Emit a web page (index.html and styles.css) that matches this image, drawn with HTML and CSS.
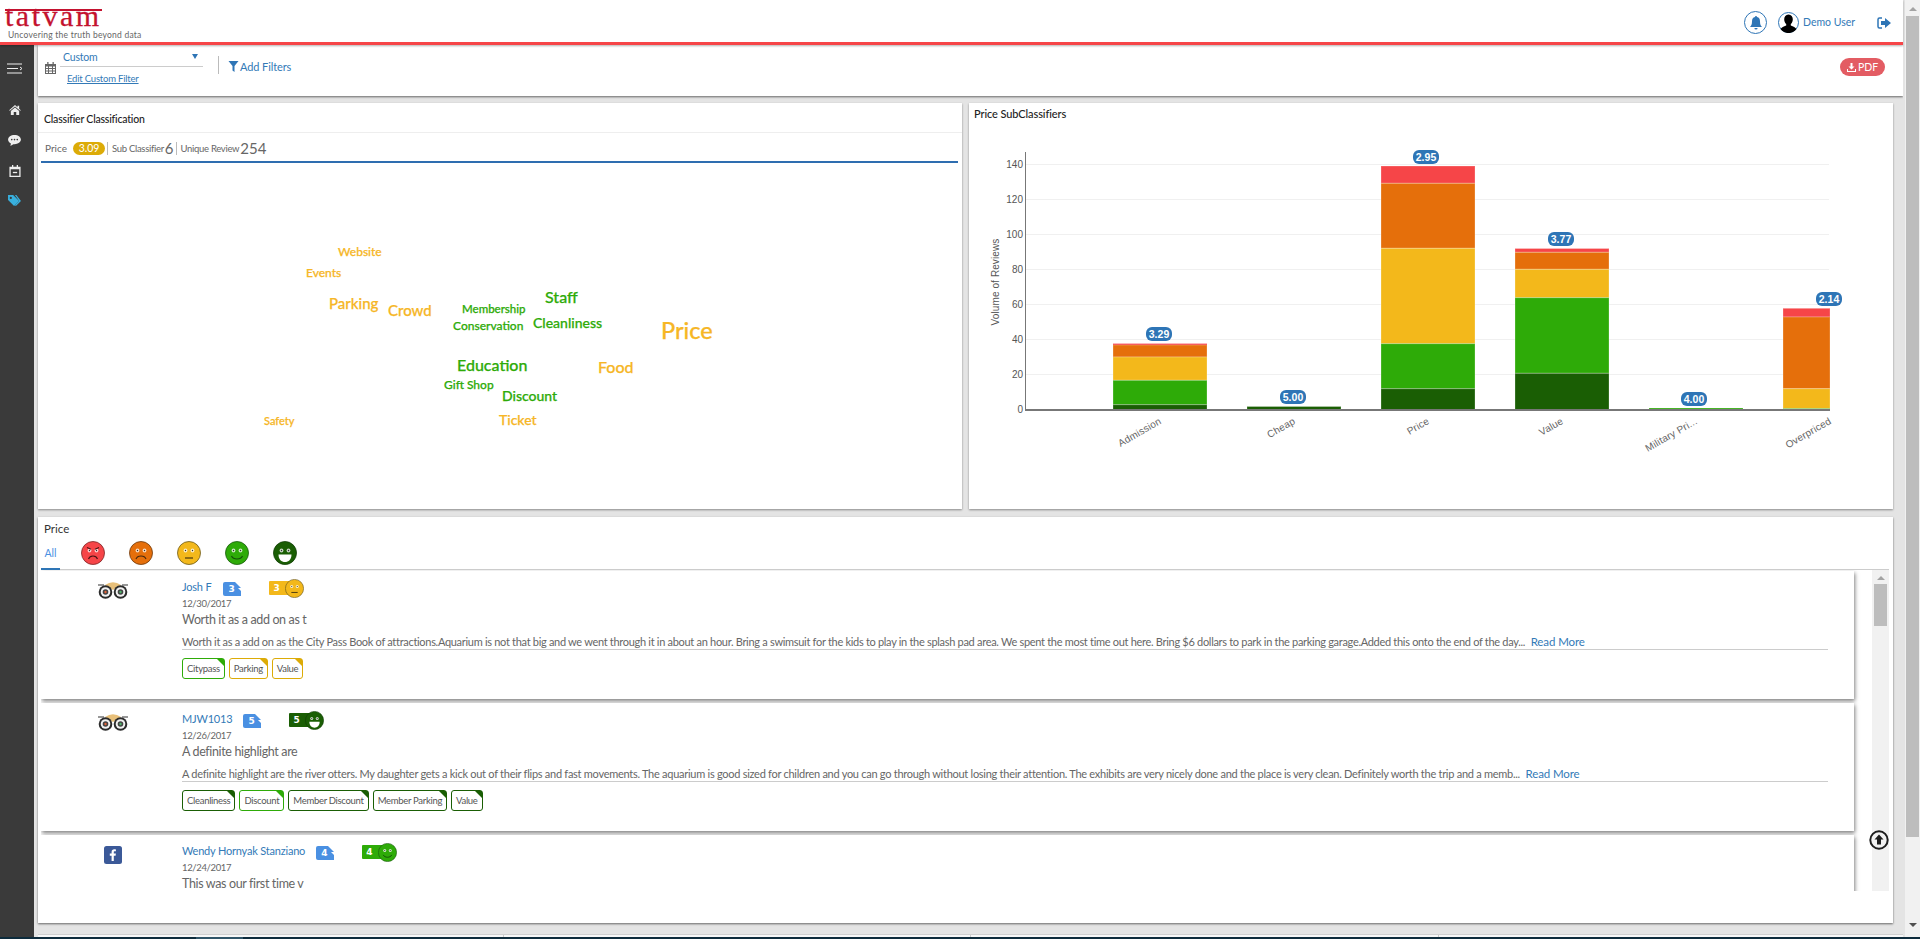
FILE: index.html
```html
<!DOCTYPE html>
<html lang="en">
<head>
<meta charset="utf-8">
<title>Tatvam</title>
<link rel="stylesheet" href="styles.css">
</head>
<body>
<svg class="defs" width="0" height="0" aria-hidden="true">
  <symbol id="eyes" viewBox="0 0 24 24">
    <circle cx="8.5" cy="9.5" r="1.9" fill="#fff" fill-opacity=".75"/><circle cx="15.5" cy="9.5" r="1.9" fill="#fff" fill-opacity=".75"/>
    <circle cx="8.5" cy="9.5" r=".7" fill="#333"/><circle cx="15.5" cy="9.5" r=".7" fill="#333"/>
  </symbol>
  <symbol id="f1" viewBox="0 0 24 24"><circle cx="12" cy="12" r="11.5" fill="#f64548" stroke="#7a2a2a" stroke-width=".8"/><use href="#eyes" width="24" height="24"/><path d="M6 6.5l4 1.8M18 6.5l-4 1.8M7.5 18c1.5-4 7.500-4 9 0" fill="none" stroke="#4a1515" stroke-width="1.200"/></symbol>
  <symbol id="f2" viewBox="0 0 24 24"><circle cx="12" cy="12" r="11.500" fill="#e56f0b" stroke="#6b3a10" stroke-width=".8"/><use href="#eyes" width="24" height="24"/><path d="M7 18c1.500-4 8.500-4 10 0" fill="none" stroke="#4a2a10" stroke-width="1.200"/></symbol>
  <symbol id="f3" viewBox="0 0 24 24"><circle cx="12" cy="12" r="11.500" fill="#f3b81b" stroke="#6b5a20" stroke-width=".8"/><use href="#eyes" width="24" height="24"/><path d="M8 17h8" fill="none" stroke="#4a3a10" stroke-width="1.200"/></symbol>
  <symbol id="f4" viewBox="0 0 24 24"><circle cx="12" cy="12" r="11.500" fill="#2eab08" stroke="#1b5c10" stroke-width=".8"/><use href="#eyes" width="24" height="24"/><path d="M6.500 15c2 4 9 4 11 0" fill="none" stroke="#14500a" stroke-width="1.200"/></symbol>
  <symbol id="f5" viewBox="0 0 24 24"><circle cx="12" cy="12" r="11.500" fill="#1a5e04" stroke="#123f08" stroke-width=".8"/><use href="#eyes" width="24" height="24"/><path d="M5.500 13.500h13c0 5-3 7.500-6.500 7.500s-6.500-2.500-6.500-7.500z" fill="#fff"/></symbol>
  <symbol id="owl" viewBox="0 0 30 18">
    <path d="M7 4Q15-1.500 23 4L15 9z" fill="#e8c07a"/>
    <path d="M0 4h6M30 4h-6" stroke="#333" stroke-width="1.200"/>
    <circle cx="7.500" cy="11" r="6.800" fill="#2c2c2c"/><circle cx="22.500" cy="11" r="6.800" fill="#2c2c2c"/>
    <circle cx="7.500" cy="11" r="4.800" fill="#f2f2f2"/><circle cx="22.500" cy="11" r="4.800" fill="#f2f2f2"/>
    <circle cx="7.500" cy="11" r="2.800" fill="#444"/><circle cx="22.500" cy="11" r="2.800" fill="#444"/>
    <circle cx="7.500" cy="11" r="1.200" fill="#e0633a"/><circle cx="22.500" cy="11" r="1.200" fill="#4fb36a"/>
  </symbol>
  <symbol id="fold" viewBox="0 0 18 14"><path d="M0 2a2 2 0 0 1 2-2h16v14H2a2 2 0 0 1-2-2z" fill="#4a90e2"/><path d="M12 0l6 6V0z" fill="#fff"/><path d="M15 6l3 3V6z" fill="#fff"/></symbol>
</svg>

<div class="shell">
  <div class="page">
    <header class="topbar">
      <div class="logo">
        <span class="logo-word">tatvam</span>
        <span class="logo-tag">Uncovering the truth beyond data</span>
      </div>
      <div class="user">
        <span class="bell">
          <svg width="12" height="14" viewBox="0 0 12 14"><path d="M6 0a1 1 0 0 1 1 1.100C9.200 1.500 10 3.300 10 5.500c0 3 .8 4.300 2 5.500H0c1.200-1.200 2-2.500 2-5.500C2 3.300 2.800 1.500 5 1.100A1 1 0 0 1 6 0zM4.400 12h3.200a1.600 1.600 0 0 1-3.200 0z" fill="#2e75b6"/></svg>
        </span>
        <span class="avatar">
          <svg width="21" height="21" viewBox="0 0 21 21"><circle cx="10.500" cy="10.500" r="10" fill="#fff" stroke="#2e75b6"/><path d="M10.500 2.500c2.800 0 4.300 2.200 4.300 4.800 0 2-.8 3.800-2 4.800v1.300c2.500 1 4.700 1.800 5.700 3.700a10 10 0 0 1-16 0c1-1.900 3.200-2.700 5.700-3.700v-1.300c-1.200-1-2-2.800-2-4.800 0-2.600 1.500-4.800 4.300-4.800z" fill="#000"/></svg>
        </span>
        <span class="user-name">Demo User</span>
        <svg class="signout" width="14" height="12" viewBox="0 0 14 12"><path d="M5 1H2.500A1.500 1.500 0 0 0 1 2.500v7A1.500 1.500 0 0 0 2.500 11H5" fill="none" stroke="#2e75b6" stroke-width="1.500"/><path d="M8 1l6 5-6 5V8H4V4h4z" fill="#2e75b6"/></svg>
      </div>
    </header>

    <div class="workspace">
      <nav class="sidebar">
        <svg class="nav-first" width="16" height="11" viewBox="0 0 16 11"><path d="M0 1h15M0 5.500h11M0 10h15" stroke="#eee" stroke-width="1.200"/><path d="M13 4l2 1.500L13 7" fill="none" stroke="#eee"/></svg>
        <svg class="nav-home" width="12" height="10" viewBox="0 0 14 12"><path d="M7 0l3 2.600V1h2v3.400l2 1.800-.8.8L7 1.800.8 7 0 6.200zM2 7.200L7 3l5 4.200V12H8.500V8.500h-3V12H2z" fill="#eee"/></svg>
        <svg class="nav-chat" width="13" height="11" viewBox="0 0 14 12"><path d="M7 0c3.900 0 7 2.200 7 5s-3.100 5-7 5h-1.200L2.500 12l.6-2.700C1.200 8.400 0 6.800 0 5c0-2.800 3.100-5 7-5z" fill="#eee"/><circle cx="4" cy="5" r=".9" fill="#3a3a3a"/><circle cx="7" cy="5" r=".9" fill="#3a3a3a"/><circle cx="10" cy="5" r=".9" fill="#3a3a3a"/></svg>
        <svg class="nav-cal" width="12" height="12" viewBox="0 0 13 14"><path d="M3 0h1.500v2h4V0H10v2h3v12H0V2h3zM1.500 5v7.500h10V5z" fill="#eee"/><path d="M4 8h5v1.500H4z" fill="#eee"/></svg>
        <svg class="nav-tag" width="13" height="12" viewBox="0 0 14 13"><path d="M0 0h5.500L12 6.500 6.500 12 0 5.500zM3 2a1.200 1.200 0 1 0 0 2.400A1.200 1.200 0 0 0 3 2z" fill="#38b0de" fill-rule="evenodd"/><path d="M7.500 0H9l5 6.500L8.500 12l-1-.8 4.500-4.700z" fill="#38b0de"/></svg>
      </nav>

      <main class="main">
        <section class="filterbar">
          <svg class="cal" width="11" height="12" viewBox="0 0 11 12"><path d="M0 2h2.200V0h1.300v2h4V0h1.300v2H11v10H0zM1 4.500v1.600h2V4.500zm3 0v1.600h3V4.500zm4 0v1.600h2V4.500zM1 7v1.600h2V7zm3 0v1.600h3V7zm4 0v1.600h2V7zM1 9.500V11h2V9.500zm3 0V11h3V9.500zm4 0V11h2V9.500z" fill="#666" fill-rule="evenodd"/></svg>
          <div class="range">
            <div class="range-select"><span>Custom</span><i class="caret"></i></div>
            <a class="range-edit">Edit Custom Filter</a>
          </div>
          <span class="vsep"></span>
          <svg class="funnel" width="11" height="11" viewBox="0 0 10 11"><path d="M0 0h10L6 5v6L4 9.500V5z" fill="#2e75b6"/></svg>
          <span class="add-filters">Add Filters</span>
          <span class="pdf">
            <svg width="9" height="9" viewBox="0 0 9 9"><path d="M3.500 0h2v3.500h2L4.500 6.500l-3-3h2zM0 6h1v2h7V6h1v3H0z" fill="#fff"/></svg>PDF
          </span>
        </section>

        <div class="panels">
          <section class="panel">
            <h2 class="panel-title ruled">Classifier Classification</h2>
            <div class="stats">
              <span class="stat-label price-label">Price</span>
              <span class="pill">3.09</span>
              <span class="stat-label divided">Sub Classifier</span><span class="stat-num">6</span>
              <span class="stat-label divided">Unique Review</span><span class="stat-num">254</span>
            </div>
            <svg class="cloud" width="924" height="346" viewBox="38 163 924 346">
              <text class="w-y" x="338" y="256" font-size="12">Website</text>
              <text class="w-y" x="306" y="277" font-size="12">Events</text>
              <text class="w-y" x="329" y="309" font-size="15">Parking</text>
              <text class="w-y" x="388" y="316" font-size="15">Crowd</text>
              <text class="w-g" x="462" y="313" font-size="11.500">Membership</text>
              <text class="w-g" x="453" y="330" font-size="12">Conservation</text>
              <text class="w-g" x="545" y="303" font-size="16">Staff</text>
              <text class="w-g" x="533" y="328" font-size="14">Cleanliness</text>
              <text class="w-y" x="661" y="339" font-size="23.500">Price</text>
              <text class="w-g" x="457" y="371" font-size="16">Education</text>
              <text class="w-y" x="598" y="373" font-size="16">Food</text>
              <text class="w-g" x="444" y="389" font-size="12">Gift Shop</text>
              <text class="w-g" x="502" y="401" font-size="14">Discount</text>
              <text class="w-y" x="499" y="425" font-size="14">Ticket</text>
              <text class="w-y" x="264" y="425" font-size="11">Safety</text>
            </svg>
          </section>

          <section class="panel">
            <h2 class="panel-title top">Price SubClassifiers</h2>
            <svg class="chart" width="924" height="376" viewBox="969 133 924 376">
              <g class="grid">
                <path d="M1025 164.500H1829M1025 199.500H1829M1025 234.500H1829M1025 269.500H1829M1025 304.500H1829M1025 339.500H1829M1025 374.500H1829"/>
              </g>
              <g class="bars">
                <rect class="c1" x="1113" y="343.500" width="94" height="2"/><rect class="c2" x="1113" y="345" width="94" height="12"/><rect class="c3" x="1113" y="357" width="94" height="23.300"/><rect class="c4" x="1113" y="380.300" width="94" height="24.400"/><rect class="c5" x="1113" y="404.700" width="94" height="5.300"/>
                <rect class="c5" x="1247" y="406.500" width="94" height="3.500"/>
                <rect class="c1" x="1381" y="166" width="94" height="17.300"/><rect class="c2" x="1381" y="183.300" width="94" height="65"/><rect class="c3" x="1381" y="248.300" width="94" height="95.400"/><rect class="c4" x="1381" y="343.700" width="94" height="45"/><rect class="c5" x="1381" y="388.700" width="94" height="21.300"/>
                <rect class="c1" x="1515" y="248.500" width="94" height="3.800"/><rect class="c2" x="1515" y="252.300" width="94" height="17"/><rect class="c3" x="1515" y="269.300" width="94" height="28.400"/><rect class="c4" x="1515" y="297.700" width="94" height="75.600"/><rect class="c5" x="1515" y="373.300" width="94" height="36.700"/>
                <rect class="c4" x="1649" y="408" width="94" height="2"/>
                <rect class="c1" x="1783" y="308.300" width="47" height="8.700"/><rect class="c2" x="1783" y="317" width="47" height="71.700"/><rect class="c3" x="1783" y="388.700" width="47" height="19.800"/><rect class="c4" x="1783" y="408.500" width="47" height="1.500"/>
              </g>
              <path class="axis" d="M1025.500 152V410"/>
              <path class="axis-x" d="M1025 410H1830"/>
              <g class="tick">
                <text x="1023" y="168">140</text><text x="1023" y="203">120</text><text x="1023" y="238">100</text><text x="1023" y="273">80</text><text x="1023" y="308">60</text><text x="1023" y="343">40</text><text x="1023" y="378">20</text><text x="1023" y="413">0</text>
              </g>
              <text class="y-title" transform="translate(999 282) rotate(-90)">Volume of Reviews</text>
              <g class="xlab">
                <text transform="translate(1162 423) rotate(-30)">Admission</text>
                <text transform="translate(1296 423) rotate(-30)">Cheap</text>
                <text transform="translate(1430 423) rotate(-30)">Price</text>
                <text transform="translate(1564 423) rotate(-30)">Value</text>
                <text transform="translate(1698 423) rotate(-30)">Military Pri...</text>
                <text transform="translate(1832 423) rotate(-30)">Overpriced</text>
              </g>
              <g class="flag">
                <rect x="1146" y="327" width="26" height="14" rx="6"/><text x="1159" y="338">3.29</text>
                <rect x="1280" y="390" width="26" height="14" rx="6"/><text x="1293" y="401">5.00</text>
                <rect x="1413" y="150" width="26" height="14" rx="6"/><text x="1426" y="161">2.95</text>
                <rect x="1548" y="232" width="26" height="14" rx="6"/><text x="1561" y="243">3.77</text>
                <rect x="1681" y="392" width="26" height="14" rx="6"/><text x="1694" y="403">4.00</text>
                <rect x="1816" y="292" width="26" height="14" rx="6"/><text x="1829" y="303">2.14</text>
              </g>
            </svg>
          </section>
        </div>

        <section class="reviews">
          <h2 class="reviews-title">Price</h2>
          <div class="tabs">
            <span class="tab-all">All</span>
            <svg class="tab-face first" width="24" height="24"><use href="#f1"/></svg>
            <svg class="tab-face" width="24" height="24"><use href="#f2"/></svg>
            <svg class="tab-face" width="24" height="24"><use href="#f3"/></svg>
            <svg class="tab-face" width="24" height="24"><use href="#f4"/></svg>
            <svg class="tab-face" width="24" height="24"><use href="#f5"/></svg>
          </div>
          <div class="review-wrap">
            <div class="review-list">
              <article class="card">
                <div class="source"><svg class="owl" width="30" height="18"><use href="#owl"/></svg></div>
                <div class="card-body">
                  <div class="meta">
                    <a class="name">Josh F</a>
                    <span class="src-badge b1"><svg width="18" height="14"><use href="#fold"/></svg><b>3</b></span>
                    <span class="sent"><b class="s3">3</b><svg width="19" height="19"><use href="#f3"/></svg></span>
                  </div>
                  <div class="date">12/30/2017</div>
                  <div class="title">Worth it as a add on as t</div>
                  <p class="text t1">Worth it as a add on as the City Pass Book of attractions.Aquarium is not that big and we went through it in about an hour. Bring a swimsuit for the kids to play in the splash pad area. We spent the most time out here. Bring $6 dollars to park in the parking garage.Added this onto the end of the day... <a class="more">Read More</a></p>
                  <div class="chips">
                    <span class="chip cg">Citypass</span><span class="chip cy">Parking</span><span class="chip cy">Value</span>
                  </div>
                </div>
              </article>
              <article class="card">
                <div class="source"><svg class="owl" width="30" height="18"><use href="#owl"/></svg></div>
                <div class="card-body">
                  <div class="meta">
                    <a class="name">MJW1013</a>
                    <span class="src-badge b2"><svg width="18" height="14"><use href="#fold"/></svg><b>5</b></span>
                    <span class="sent"><b class="s5">5</b><svg width="19" height="19"><use href="#f5"/></svg></span>
                  </div>
                  <div class="date">12/26/2017</div>
                  <div class="title">A definite highlight are</div>
                  <p class="text t2">A definite highlight are the river otters. My daughter gets a kick out of their flips and fast movements. The aquarium is good sized for children and you can go through without losing their attention. The exhibits are very nicely done and the place is very clean. Definitely worth the trip and a memb... <a class="more">Read More</a></p>
                  <div class="chips">
                    <span class="chip cd">Cleanliness</span><span class="chip cg">Discount</span><span class="chip cd">Member Discount</span><span class="chip cd">Member Parking</span><span class="chip cd">Value</span>
                  </div>
                </div>
              </article>
              <article class="card">
                <div class="source"><svg class="fb" width="18" height="18" viewBox="0 0 18 18"><rect width="18" height="18" rx="2.500" fill="#3b5998"/><path d="M9.800 15V9.700h1.800l.3-2.100H9.800V6.300c0-.6.200-1 1-1h1.100V3.400c-.2 0-.9-.1-1.600-.1-1.600 0-2.700 1-2.700 2.800v1.500H5.800v2.100h1.800V15z" fill="#fff"/></svg></div>
                <div class="card-body">
                  <div class="meta">
                    <a class="name">Wendy Hornyak Stanziano</a>
                    <span class="src-badge b2"><svg width="18" height="14"><use href="#fold"/></svg><b>4</b></span>
                    <span class="sent"><b class="s4">4</b><svg width="19" height="19"><use href="#f4"/></svg></span>
                  </div>
                  <div class="date">12/24/2017</div>
                  <div class="title">This was our first time v</div>
                </div>
              </article>
            </div>
            <div class="inner-scroll"><i class="arrow-up small"></i><span class="inner-thumb"></span></div>
            <svg class="to-top" width="20" height="20" viewBox="0 0 20 20"><circle cx="10" cy="10" r="8.700" fill="none" stroke="#1d1d1d" stroke-width="2"/><path d="M10 4.500l4.500 5H12v5H8v-5H5.500z" fill="#1d1d1d"/></svg>
          </div>
        </section>

        <div class="tail"><span></span><span></span><span></span><span></span></div>
      </main>
    </div>
  </div>
  <div class="page-scroll"><i class="arrow-up"></i><span class="page-thumb"></span><i class="arrow-down"></i></div>
</div>
<div class="taskbar"><span></span></div>
</body>
</html>
```
FILE: styles.css
```css
* { box-sizing: border-box; }
html, body { margin: 0; height: 939px; overflow: hidden; }
body { font-family: Lato, "Liberation Sans", sans-serif; color: #555; background: #e4e4e4; }
.defs { position: absolute; }
a { color: #337ab7; }
h2 { margin: 0; font-weight: 400; }

.shell { display: flex; height: 937px; }
.page { width: 1903px; display: flex; flex-direction: column; }
.taskbar { height: 2px; background: #0d2b3c; }
.taskbar span { display: block; width: 47px; height: 2px; margin-left: 196px; background: #2f5468; }

.page-scroll { width: 17px; background: #f1f1f1; display: flex; flex-direction: column; align-items: center; border-left: 2px solid #e4e4e4; }
.arrow-up { width: 0; height: 0; margin-top: 7px; border: 4px solid transparent; border-top: 0; border-bottom: 4px solid #a3a3a3; }
.page-thumb { width: 13px; height: 821px; margin-top: 5px; background: #bdbdbd; }
.arrow-down { width: 0; height: 0; margin-top: 86px; border: 4px solid transparent; border-bottom: 0; border-top: 4px solid #505050; }

.topbar { height: 45px; background: #fff; border-bottom: 3px solid #f64548; display: flex; justify-content: space-between; box-shadow: 0 1px 2px rgba(0,0,0,.3); position: relative; }
.logo { display: flex; flex-direction: column; padding-left: 5px; }
.logo-word { display: block; width: 97px; height: 19px; margin-top: 9px; font: 400 30px/10px "Liberation Serif", serif; letter-spacing: 2.500px; color: #c4122f; -webkit-text-stroke: .3px #c4122f; border-top: 2px solid #c4122f; white-space: nowrap; }
.logo-tag { margin: 2px 0 0 3px; font-size: 8.500px; line-height: 10px; letter-spacing: .23px; color: #666; white-space: nowrap; }
.user { display: flex; align-items: center; padding-top: 3px; color: #337ab7; }
.bell { width: 23px; height: 23px; border: 1px solid #2e75b6; border-radius: 50%; display: flex; align-items: center; justify-content: center; }
.avatar { display: flex; margin-left: 11px; }
.user-name { margin: -1px 0 0 4px; font-size: 10.500px; width: 74px; }
.signout { margin-right: 12px; }

.workspace { flex: 1; display: flex; min-height: 0; }
.sidebar { width: 34px; background: #3a3a3a; margin-right: 4px; padding-right: 5px; display: flex; flex-direction: column; align-items: center; flex-shrink: 0; }
.nav-first { margin-top: 18px; }
.nav-home { margin-top: 31px; }
.nav-chat { margin-top: 20px; }
.nav-cal { margin-top: 19px; }
.nav-tag { margin-top: 18px; }

.main { flex: 1; min-width: 0; display: flex; flex-direction: column; }
.filterbar { height: 51px; background: #fff; display: flex; align-items: flex-start; box-shadow: 0 1px 2px rgba(0,0,0,.55); padding-right: 18px; }
.cal { margin: 17px 0 0 7px; }
.range { width: 143px; margin-left: 4px; }
.range-select { height: 22px; border-bottom: 1px solid #ccc; padding: 6px 0 0 3px; font-size: 10.500px; letter-spacing: -.2px; color: #337ab7; display: flex; justify-content: space-between; }
.caret { width: 0; height: 0; margin: 3px 5px 0 0; border: 3px solid transparent; border-bottom: 0; border-top: 5px solid #2e75b6; }
.range-edit { display: block; margin: 5px 0 0 7px; font-size: 9.500px; letter-spacing: -.2px; line-height: 13px; text-decoration: underline; }
.vsep { width: 1px; height: 18px; margin: 11px 9px 0 15px; background: #bbb; }
.funnel { margin-top: 16px; }
.add-filters { margin: 15px 0 0 1px; font-size: 11px; letter-spacing: -.1px; color: #337ab7; }
.pdf { margin: 13px 0 0 auto; width: 45px; height: 18px; border-radius: 9px; background: #e2545b; color: #fff; font-size: 10.500px; display: flex; align-items: center; justify-content: center; gap: 2px; opacity: .95; }

.panels { display: grid; grid-template-columns: 924px 924px; gap: 7px; margin-top: 7px; height: 406px; }
.panel { background: #fff; box-shadow: 0 1px 2px rgba(0,0,0,.4); overflow: hidden; }
.panel-title { height: 30px; padding: 9px 0 0 6px; font-size: 10.500px; letter-spacing: -.2px; line-height: 14px; color: #222; font-weight: 500; }
.panel-title.top { padding: 4px 0 0 5px; font-size: 11px; letter-spacing: -.1px; }
.ruled { border-bottom: 1px solid #eee; }
.stats { height: 30px; margin: 0 4px 0 3px; border-bottom: 2px solid #2e6db0; display: flex; align-items: center; padding: 2px 0 0 4px; }
.stat-label { font-size: 9.500px; letter-spacing: -.3px; color: #666; }
.price-label { width: 28px; font-size: 10px; letter-spacing: 0; }
.pill { width: 32px; height: 13px; border-radius: 7px; background: #dcab07; color: #fff; font-size: 10.500px; line-height: 13px; text-align: center; margin-right: 2px; }
.divided { border-left: 1px solid #bbb; padding-left: 4px; line-height: 13px; }
.stat-num { font-size: 15px; line-height: 13px; color: #666; margin: 0 2px 0 1px; }
.cloud, .chart { display: block; }
.cloud text { font-family: Lato, sans-serif; font-weight: 500; stroke-width: .25px; }
.w-y { fill: #f6b626; stroke: #f6b626; }
.w-g { fill: #2eab08; stroke: #2eab08; }

.grid path { stroke: #f0f0f0; fill: none; }
.bars rect { stroke: rgba(255,255,255,.25); stroke-width: 1; }
.c1 { fill: #f64548; } .c2 { fill: #e56f0b; } .c3 { fill: #f3b81b; } .c4 { fill: #2eab08; } .c5 { fill: #1a5e04; }
.axis { stroke: #777; fill: none; }
.axis-x { stroke: #777; stroke-width: 2; fill: none; }
.tick text { font: 10px "Liberation Sans", sans-serif; fill: #555; text-anchor: end; }
.y-title { font: 10px "Liberation Sans", sans-serif; letter-spacing: .1px; fill: #555; text-anchor: middle; }
.xlab text { font: 10px "Liberation Sans", sans-serif; letter-spacing: .2px; fill: #666; text-anchor: end; }
.flag rect { fill: #2e75b6; }
.flag text { font: 700 10.500px "Liberation Sans", sans-serif; fill: #fff; text-anchor: middle; }

.reviews { margin: 8px 10px 0 0; height: 406px; background: #fff; box-shadow: 0 1px 2px rgba(0,0,0,.55); padding: 0 4px 0 3px; display: flex; flex-direction: column; }
.reviews-title { height: 23px; padding: 5px 0 0 3px; font-size: 11.500px; line-height: 14px; color: #333; }
.tabs { height: 30px; border-bottom: 1px solid #ccc; display: flex; align-items: flex-start; }
.tab-all { width: 19px; height: 30px; padding-top: 7px; text-align: center; font-size: 10.500px; color: #4a90e2; border-bottom: 2px solid #2e75b6; }
.tab-face { margin: 1px 24px 0 0; }
.tab-face.first { margin-left: 21px; }
.review-wrap { height: 321px; display: flex; position: relative; }
.review-list { width: 1831px; overflow: hidden; padding-top: 1px; }
.card { width: 1813px; height: 128px; margin-bottom: 4px; background: #fff; box-shadow: 1px 2px 4px rgba(0,0,0,.5); display: flex; }
.source { width: 141px; display: flex; justify-content: center; flex-shrink: 0; padding-left: 3px; }
.owl { margin-top: 10px; }
.fb { margin-top: 11px; }
.card-body { flex: 1; min-width: 0; padding: 8px 26px 0 0; }
.meta { height: 16px; display: flex; align-items: center; }
.name { font-size: 11px; letter-spacing: -.2px; line-height: 16px; color: #337ab7; white-space: nowrap; }
.src-badge { position: relative; width: 18px; height: 14px; display: block; margin-top: 3px; }
.src-badge svg { display: block; }
.src-badge b { position: absolute; left: 5px; top: 0; font: 700 9px/14px "DejaVu Sans", sans-serif; color: #fff; }
.b1 { margin-left: 12px; }
.b2 { margin-left: 11px; }
.sent { margin: 2px 0 0 28px; height: 14px; display: flex; align-items: center; color: #fff; }
.sent b { width: 22px; height: 14px; margin-right: -6px; padding-left: 4px; font: 700 9px/14px "DejaVu Sans", sans-serif; border-radius: 1px; }
.sent svg { flex-shrink: 0; position: relative; }
.s3 { background: #f3b81b; }
.s5 { background: #1a5e04; }
.s4 { background: #2eab08; }
.date { height: 16px; padding-top: 1px; font-size: 9.500px; letter-spacing: -.35px; line-height: 15px; color: #666; }
.title { height: 20px; font-size: 12.500px; letter-spacing: -.36px; line-height: 18px; color: #666; white-space: nowrap; }
.text { margin: 0; height: 19px; padding-top: 3px; border-bottom: 1px solid #ccc; font-size: 11px; line-height: 15px; color: #666; white-space: nowrap; }
.t1 { letter-spacing: -.3px; }
.t2 { letter-spacing: -.27px; }
.more { margin-left: 3px; font-size: 11.500px; letter-spacing: -.1px; }
.chips { display: flex; gap: 4px; margin-top: 8px; }
.chip { position: relative; height: 21px; padding: 0 4px; border: 1px solid; border-radius: 3px; font-size: 9.500px; letter-spacing: -.3px; line-height: 19px; color: #555; }
.chip::after { content: ""; position: absolute; top: 0; right: 0; border-style: solid; border-width: 0 7px 7px 0; border-color: transparent; }
.cg { border-color: #2eab08; } .cg::after { border-right-color: #2eab08; }
.cy { border-color: #dcab07; } .cy::after { border-right-color: #dcab07; }
.cd { border-color: #1a5e04; } .cd::after { border-right-color: #1a5e04; }
.inner-scroll { width: 17px; background: #f1f1f1; display: flex; flex-direction: column; align-items: center; }
.arrow-up.small { margin-top: 6px; }
.inner-thumb { width: 13px; height: 42px; margin-top: 4px; background: #bdbdbd; }
.to-top { position: absolute; left: 1828px; top: 260px; }

.tail { flex: 1; margin-top: 11px; background: #f7f7f7; border-top: 1px solid #d0d0d0; display: grid; grid-template-columns: 466px 467px 468px 1fr; min-height: 0; }
.tail span { border-right: 1px solid #ccc; }
.tail span:last-child { border-right: 0; }
```
